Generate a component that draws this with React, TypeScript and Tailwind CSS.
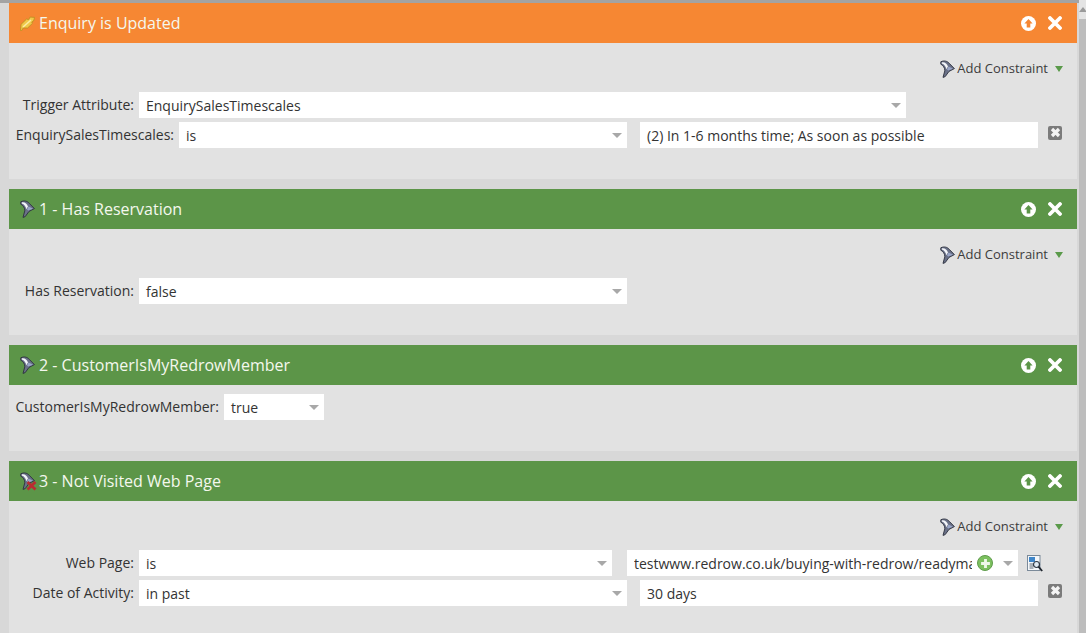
const FONT = "font-['Open_Sans','Noto_Sans',sans-serif]";

const ConstraintIcon = ({ className = "" }: { className?: string }) => (
  <svg width="15" height="18" viewBox="0 0 15 18" className={className}>
    <path d="M0.8 1.8 C4 0.2 7.5 1 9.5 3.6 L14.4 8.6 L9 11.4 L5.2 16.6 L3 17.4 L4.8 10.8 C5 8 3 5.2 0.8 4.2 Z" fill="#6a7188" stroke="#2b303d" strokeWidth="0.9" />
    <path d="M1.8 2.4 C5 2 7 4 8 6.4 L6.2 9.2 C6 6.4 4.2 4.2 1.8 3.4 Z" fill="#f4f6fa" />
    <path d="M8.5 6.6 L13 8.7 L8.4 10.6 L7 9.6 Z" fill="#9aa6c8" />
  </svg>
);

const FeatherIcon = () => (
  <svg width="15" height="15" viewBox="0 0 15 15">
    <path d="M0.6 14.6 L1 8.4 L6.6 3 L8.6 3.6 L10.2 1 L14.6 1.4 L13.6 5 L11.8 6 L12.4 7.4 L7.6 12 L3.2 12 L1.8 14.6 Z" fill="#f0c94a" stroke="#c08f22" strokeWidth="0.9" />
    <path d="M3 11 L11 4" stroke="#fbeea6" strokeWidth="1.6" />
  </svg>
);

const FailedIcon = () => (
  <span className="relative block h-[18px] w-[15px]">
    <ConstraintIcon />
    <svg width="11" height="11" viewBox="0 0 11 11" className="absolute bottom-[-1px] right-[-2px]">
      <path d="M1.5 2 L9.5 9.5 M9.5 2 L1.5 9.5" stroke="#b92d32" strokeWidth="2.8" />
    </svg>
  </span>
);

const UpIcon = ({ color }: { color: string }) => (
  <svg width="15" height="15" viewBox="0 0 15 15">
    <circle cx="7.5" cy="7.5" r="7.5" fill="#fff" />
    <path d="M7.5 3 L11.6 7.4 L9.3 7.4 L9.3 11.6 L5.7 11.6 L5.7 7.4 L3.4 7.4 Z" fill={color} />
  </svg>
);

const CloseIcon = () => (
  <svg width="14" height="14" viewBox="0 0 14 14">
    <path d="M2 2 L12 12 M12 2 L2 12" stroke="#fff" strokeWidth="3.8" strokeLinecap="round" />
  </svg>
);

const RemoveButton = () => (
  <div className="flex h-[14px] w-[14px] items-center justify-center rounded-[2px] bg-[#7b7b7b]">
    <svg width="11" height="11" viewBox="0 0 11 11">
      <path d="M2 2 L9 9 M9 2 L2 9" stroke="#f4f4f4" strokeWidth="3.2" />
    </svg>
  </div>
);

const Caret = () => <span className="h-0 w-0 border-x-[5px] border-t-[5px] border-x-transparent border-t-[#a8a8a8]" />;

const AddConstraint = () => (
  <div className="flex h-[19px] items-center justify-end pr-[14px]">
    <ConstraintIcon />
    <span className="ml-[2px] text-[13px] text-[#3c3c3c]">Add Constraint</span>
    <span className="ml-[7px] h-0 w-0 border-x-[4px] border-t-[6px] border-x-transparent border-t-[#5a9a4a]" />
  </div>
);

const Label = ({ text, width }: { text: string; width: string }) => (
  <div className={`${width} mb-px shrink-0 pr-[5px] text-right text-[14px] text-[#333]`}>{text}</div>
);

const Select = ({ value, width }: { value: string; width: string }) => (
  <div className={`${width} flex h-[26px] shrink-0 items-center justify-between bg-white pl-[7px] pr-[5px] text-[14px] text-[#333]`}>
    <span>{value}</span>
    <Caret />
  </div>
);

const Input = ({ value }: { value: string }) => (
  <div className="ml-[13px] flex h-[26px] w-[398px] shrink-0 items-center bg-white pl-[7px] text-[14px] text-[#333]">{value}</div>
);

const Row = ({ children }: { children: React.ReactNode }) => (
  <div className="flex h-[26px] items-center">{children}</div>
);

const Panel = ({
  title,
  icon,
  bg,
  arrow,
  bodyClass,
  children,
}: {
  title: string;
  icon: React.ReactNode;
  bg: string;
  arrow: string;
  bodyClass: string;
  children: React.ReactNode;
}) => (
  <section>
    <header className={`${bg} flex h-10 items-center pl-[11px] pr-[15px]`}>
      <span className="flex w-[19px] items-center">{icon}</span>
      <h2 className="text-[16px] text-[#f4f8ee]">{title}</h2>
      <div className="ml-auto flex items-center gap-[12px]">
        <UpIcon color={arrow} />
        <CloseIcon />
      </div>
    </header>
    <div className={`${bodyClass} bg-[#e2e2e2]`}>{children}</div>
  </section>
);

export default function App() {
  return (
    <div className={`${FONT} flex h-[633px] w-[1086px] overflow-hidden bg-[#d8d8d8]`}>
      <div className="flex-1">
        <div className="h-[3px] bg-[#a3a3a3]" />
        <div className="flex flex-col gap-[10px] pl-[9px] pr-[2px]">
          <Panel title="Enquiry is Updated" icon={<FeatherIcon />} bg="bg-[#f68733]" arrow="#f68733" bodyClass="h-[136px] pt-[16px]">
            <AddConstraint />
            <div className="mt-[14px] flex flex-col gap-1">
              <Row>
                <Label text="Trigger Attribute:" width="w-[130px]" />
                <Select value="EnquirySalesTimescales" width="w-[767px]" />
              </Row>
              <Row>
                <Label text="EnquirySalesTimescales:" width="w-[170px]" />
                <Select value="is" width="w-[448px]" />
                <Input value="(2) In 1-6 months time; As soon as possible" />
                <div className="mb-[5px] ml-[10px]">
                  <RemoveButton />
                </div>
              </Row>
            </div>
          </Panel>
          <Panel title="1 - Has Reservation" icon={<ConstraintIcon />} bg="bg-[#5c9548]" arrow="#5c9548" bodyClass="h-[106px] pt-[16px]">
            <AddConstraint />
            <div className="mt-[14px]">
              <Row>
                <Label text="Has Reservation:" width="w-[130px]" />
                <Select value="false" width="w-[488px]" />
              </Row>
            </div>
          </Panel>
          <Panel title="2 - CustomerIsMyRedrowMember" icon={<ConstraintIcon />} bg="bg-[#5c9548]" arrow="#5c9548" bodyClass="h-[66px] pt-[9px]">
            <Row>
              <Label text="CustomerIsMyRedrowMember:" width="w-[215px]" />
              <Select value="true" width="w-[100px]" />
            </Row>
          </Panel>
          <Panel title="3 - Not Visited Web Page" icon={<FailedIcon />} bg="bg-[#5c9548]" arrow="#5c9548" bodyClass="h-[132px] pt-[16px]">
            <AddConstraint />
            <div className="mt-[14px] flex flex-col gap-1">
              <Row>
                <Label text="Web Page:" width="w-[130px]" />
                <Select value="is" width="w-[473px]" />
                <div className="ml-[15px] flex h-[26px] w-[391px] shrink-0 items-center bg-white pl-[7px] pr-[5px] text-[14px] text-[#333]">
                  <span className="w-[338px] overflow-hidden whitespace-nowrap">testwww.redrow.co.uk/buying-with-redrow/readyma</span>
                  <span className="ml-[5px] flex h-4 w-4 shrink-0 items-center justify-center rounded-full border border-[#5f9c4c] bg-[#7cc05f]">
                    <svg width="11" height="11" viewBox="0 0 10 10">
                      <path d="M5 1 V9 M1 5 H9" stroke="#eef8e8" strokeWidth="2.6" />
                    </svg>
                  </span>
                  <span className="ml-auto flex">
                    <Caret />
                  </span>
                </div>
                <svg width="16" height="17" viewBox="0 0 16 17" className="ml-[9px]">
                  <rect x="0.5" y="0.5" width="12.5" height="15" fill="#f4f7fa" stroke="#7b8a99" />
                  <rect x="2" y="2" width="6" height="5" fill="#3f86c9" />
                  <path d="M2.5 9 H6.5 M2.5 11 H6.5 M2.5 13 H6.5" stroke="#5d6975" />
                  <circle cx="9.5" cy="9.5" r="3" fill="#dfeaf2" stroke="#2f3945" strokeWidth="1.2" />
                  <path d="M11.5 11.7 L15.2 16" stroke="#20272f" strokeWidth="1.8" />
                </svg>
              </Row>
              <Row>
                <Label text="Date of Activity:" width="w-[130px]" />
                <Select value="in past" width="w-[488px]" />
                <Input value="30 days" />
                <div className="mb-[5px] ml-[10px]">
                  <RemoveButton />
                </div>
              </Row>
            </div>
          </Panel>
        </div>
      </div>
      <aside className="flex w-[7px] shrink-0 flex-col bg-[#bdbdbd]">
        <div className="flex h-[19px] items-center justify-center bg-[#e4e4e4]">
          <span className="h-0 w-0 border-x-[4px] border-b-[5px] border-x-transparent border-b-[#9a9a9a]" />
        </div>
      </aside>
    </div>
  );
}
